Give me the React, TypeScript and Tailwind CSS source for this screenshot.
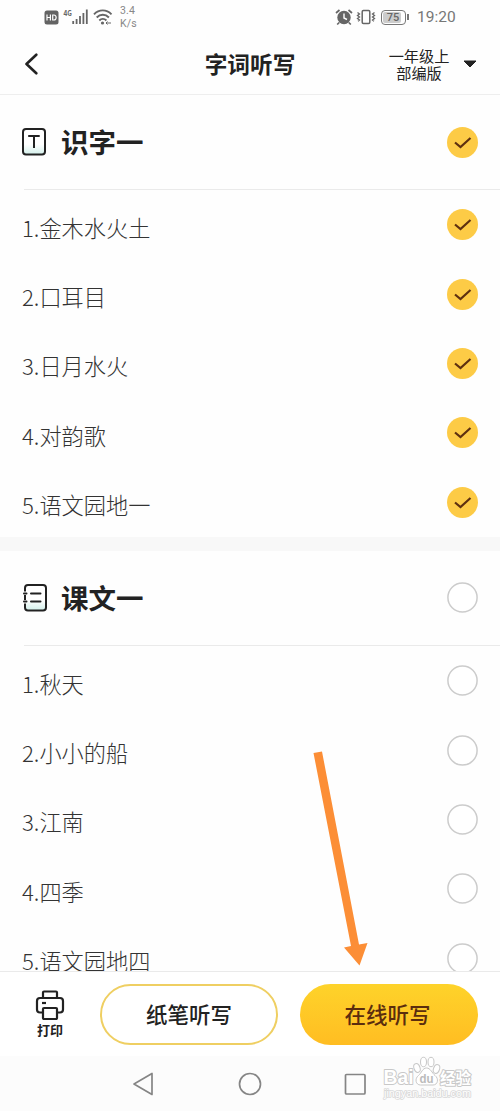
type Section = {
  title: string;
  icon: 'text' | 'book';
  checked: boolean;
  lessons: string[];
};

const sections: Section[] = [
  {
    title: '识字一',
    icon: 'text',
    checked: true,
    lessons: ['1.金木水火土', '2.口耳目', '3.日月水火', '4.对韵歌', '5.语文园地一'],
  },
  {
    title: '课文一',
    icon: 'book',
    checked: false,
    lessons: ['1.秋天', '2.小小的船', '3.江南', '4.四季', '5.语文园地四'],
  },
];

function StatusBar() {
  return (
    <div className="flex h-[34px] shrink-0 items-center justify-between pr-[44px] pl-[44px] text-[#777]">
      <div className="flex items-center">
        <svg width="15" height="15" viewBox="0 0 15 15">
          <rect x="0.5" y="0.5" width="14" height="14" rx="2.5" fill="#636363" />
          <path d="M3 4.5v6M3 7.5h3.4M6.4 4.5v6M8.7 5v5h1.2c3 0 3-5 0-5z" fill="none" stroke="#fff" strokeWidth="1.2" />
        </svg>
        <svg className="ml-[4px]" width="26" height="18" viewBox="0 0 26 18">
          <text x="0.5" y="7.5" fontSize="8" fontWeight="700" fill="#666" textLength="8.5" lengthAdjust="spacingAndGlyphs">4G</text>
          <path d="M10.2 13v3M13.6 11v5M17 8v8M20.4 5v11M23.8 1.500v14.500" stroke="#666" strokeWidth="1.8" />
        </svg>
        <svg className="ml-[4px]" width="20" height="18" viewBox="0 0 20 18" fill="none" stroke="#666" strokeWidth="1.9">
          <path d="M1 6.300c5-5.200 12.500-5.200 17.500 0M3.700 9.500c3.500-3.700 8.700-3.700 12.200 0M6.300 12.500c2.100-2.200 5-2.200 7.100 0" />
          <circle cx="9.500" cy="15" r="1.600" fill="#666" stroke="none" />
          <path d="M13 15h5M14.500 13.500l-1.500 1.500 1.500 1.500" strokeWidth="1" />
        </svg>
        <div className="ml-[7px] font-['Roboto',sans-serif] text-[10.500px] leading-[13px] tracking-[0.2px] text-[#888]">
          <div>3.4</div>
          <div>K/s</div>
        </div>
      </div>
      <div className="flex items-center">
        <svg width="18" height="18" viewBox="0 0 18 18">
          <circle cx="9" cy="9.500" r="6.700" fill="#666" />
          <path d="M1 5l3.500-3M17 5l-3.500-3M4.200 14.500l-2 2M13.800 14.500l2 2" stroke="#666" strokeWidth="1.700" />
          <path d="M9 5.500v4.500l3 1.500" fill="none" stroke="#fff" strokeWidth="1.400" />
        </svg>
        <svg className="ml-[3px]" width="20" height="18" viewBox="0 0 20 18" fill="none" stroke="#666">
          <rect x="6.200" y="2.500" width="7.600" height="13" rx="1.200" strokeWidth="1.500" />
          <path d="M1.500 4.500l2 1.500-2 1.500 2 1.500-2 1.500 2 1.500-1.500 1.200M18.500 4.500l-2 1.500 2 1.500-2 1.500 2 1.500-2 1.500 1.500 1.200" strokeWidth="1.300" />
        </svg>
        <div className="ml-[5px] flex h-[15px] w-[25px] items-center rounded-[4px] border border-[#777] p-px">
          <div className="flex h-full w-[18px] items-center justify-center rounded-[2px] bg-[#ccc] pl-[2px] font-['Roboto',sans-serif] text-[11px] leading-none font-medium text-[#666]">
            75
          </div>
        </div>
        <div className="ml-px h-[6px] w-[2px] bg-[#777]" />
        <span className="ml-[8px] w-[39px] pt-[2px] font-['Roboto','Noto_Sans_CJK_SC',sans-serif] text-[15.500px] leading-none whitespace-nowrap">
          19:20
        </span>
      </div>
    </div>
  );
}

function Header() {
  return (
    <header className="grid h-[61px] shrink-0 grid-cols-[150px_200px_150px] items-center border-b border-[#eee]">
      <svg className="ml-[24px]" width="15" height="22" viewBox="0 0 15 22" fill="none" stroke="#222" strokeWidth="2.600">
        <path d="M12.300 1.700L2.500 11l9.800 9.300" strokeLinecap="round" strokeLinejoin="round" />
      </svg>
      <h1 className="text-center text-[22.700px] leading-none font-bold text-[#222]">字词听写</h1>
      <div className="flex items-center">
        <div className="ml-[38px] w-[62px] text-center text-[15.200px] leading-[17px] whitespace-nowrap text-[#222]">
          一年级上
          <br />
          部编版
        </div>
        <svg className="ml-[13px]" width="14" height="8" viewBox="0 0 14 8">
          <path d="M1 1h12L7 7z" fill="#222" stroke="#222" strokeLinejoin="round" />
        </svg>
      </div>
    </header>
  );
}

function CheckCircle({ checked }: { checked: boolean }) {
  if (!checked) {
    return (
      <svg className="shrink-0" width="31" height="31" viewBox="0 0 31 31">
        <circle cx="15.500" cy="15.500" r="14.600" fill="#fff" stroke="#ccc" strokeWidth="1.500" />
      </svg>
    );
  }
  return (
    <span className="flex h-[31px] w-[31px] shrink-0 items-center justify-center rounded-full bg-[#fdcb46]">
      <svg width="19" height="15" viewBox="0 0 19 15" fill="none" stroke="#5e3010" strokeWidth="2.200">
        <path d="M2 7.500l5.500 4.500L17.500 3" />
      </svg>
    </span>
  );
}

function SectionIcon({ name }: { name: Section['icon'] }) {
  return (
    <svg width="26" height="30" viewBox="0 0 26 30" fill="none" stroke="#222" strokeWidth="2" strokeLinecap="round">
      <defs>
        <linearGradient id={name} x1="0" y1="0" x2="0" y2="1">
          <stop offset="0.600" stopColor="#fff" />
          <stop offset="1" stopColor="#d2efea" />
        </linearGradient>
      </defs>
      {name === 'text' ? (
        <>
          <rect x="2" y="2" width="22" height="25.500" rx="3" fill={`url(#${name})`} />
          <path d="M7.200 9h11.500M13 9v12" strokeLinecap="butt" />
        </>
      ) : (
        <>
          <rect x="4" y="2" width="21" height="25.500" rx="3" fill={`url(#${name})`} />
          <path d="M4 8.500v3.500M4 17v3.500" stroke="#fff" strokeWidth="2.500" strokeLinecap="butt" />
          <path d="M3 10.500h2.500M3 18.500h2.500M4 13v3M10 10.500h9.500M10 18.500h9.500" />
        </>
      )}
    </svg>
  );
}

function LessonSection({ section }: { section: Section }) {
  return (
    <section>
      <div className="flex h-[94px] items-center pr-[22px] pl-[21px]">
        <SectionIcon name={section.icon} />
        <h2 className="ml-[14px] flex-1 text-[27.500px] leading-none font-bold text-[#222]">{section.title}</h2>
        <CheckCircle checked={section.checked} />
      </div>
      <div className="ml-[24px] h-px bg-[#eaeaea]" />
      <ul>
        {section.lessons.map((lesson) => (
          <li key={lesson} className="flex h-[69.400px] items-center justify-between pr-[22px] pl-[22px]">
            <span className="pt-[4px] text-[22.200px] leading-none font-light text-[#333]">{lesson}</span>
            <CheckCircle checked={section.checked} />
          </li>
        ))}
      </ul>
    </section>
  );
}

function ActionBar() {
  return (
    <div className="flex h-[85px] shrink-0 items-center border-t border-[#eaeaea] bg-white">
      <button className="ml-[34px] flex w-[32px] flex-col items-center text-[#222]">
        <svg width="30" height="30" viewBox="0 0 30 30" fill="none" stroke="#222" strokeWidth="2.200" strokeLinejoin="round">
          <path d="M8 8V2.500q0-1 1-1h12q1 0 1 1V8" />
          <path d="M8 22.500H5q-3 0-3-3V11q0-3 3-3h20q3 0 3 3v8.500q0 3-3 3h-3" />
          <rect x="8" y="18" width="14" height="11" rx="1" />
          <path d="M7 13h4" />
        </svg>
        <span className="mt-[3px] mb-[3px] text-[13px] leading-none font-bold whitespace-nowrap">打印</span>
      </button>
      <button className="ml-[34px] h-[61px] w-[178px] rounded-full border-2 border-[#efcf62] bg-white text-[21.500px] leading-none font-medium text-[#222]">
        纸笔听写
      </button>
      <button className="ml-[22px] h-[61px] w-[178px] rounded-full bg-linear-to-b from-[#fed32a] to-[#ffbd22] pr-[3px] text-[21.500px] leading-none font-medium text-[#5b2d0e]">
        在线听写
      </button>
    </div>
  );
}

function Watermark() {
  return (
    <svg
      className="absolute top-[1055px] left-[380px] font-['Liberation_Sans','Noto_Sans_CJK_SC',sans-serif]"
      width="96"
      height="46"
      viewBox="0 0 96 46"
      fill="#fff"
      stroke="#c8c8c8"
      strokeLinejoin="round"
    >
      <g fontWeight="700" strokeWidth="2" paintOrder="stroke">
        <text x="3.500" y="29" fontSize="21" textLength="30" lengthAdjust="spacingAndGlyphs">Bai</text>
        <text x="60" y="28.500" fontSize="15.500" textLength="31" lengthAdjust="spacingAndGlyphs">经验</text>
      </g>
      <g strokeWidth="1">
        <ellipse cx="37" cy="13" rx="3" ry="4.500" transform="rotate(-20 37 13)" />
        <ellipse cx="43.500" cy="7" rx="3" ry="4.700" />
        <ellipse cx="51" cy="7" rx="3" ry="4.700" />
        <ellipse cx="56.500" cy="14" rx="3" ry="4.500" transform="rotate(20 56.500 14)" />
        <path d="M46.500 13c-4 0-5 5-8 7.500-4 3-3 9.500 2 9.500h12.500c5 0 6-6.500 2-9.500-3-2.500-4.500-7.500-8.500-7.500z" />
      </g>
      <text x="39.500" y="27.500" fontSize="12" fontWeight="700" fill="#bbb" stroke="none" textLength="14" lengthAdjust="spacingAndGlyphs">du</text>
      <text x="4" y="42" fontSize="10.500" stroke="#d8d8d8" strokeWidth="1.600" paintOrder="stroke" textLength="87" lengthAdjust="spacingAndGlyphs">
        jingyan.baidu.com
      </text>
    </svg>
  );
}

function SystemNav() {
  return (
    <div className="flex h-[55px] shrink-0 items-center bg-[#fcfcfc]">
      <svg className="ml-[132px]" width="22" height="24" viewBox="0 0 22 24" fill="none" stroke="#858585" strokeWidth="1.700">
        <path d="M20 1.500v21L2 12z" strokeLinejoin="round" />
      </svg>
      <svg className="ml-[84px]" width="24" height="24" viewBox="0 0 24 24" fill="none" stroke="#858585" strokeWidth="1.700">
        <circle cx="12" cy="12" r="10.500" />
      </svg>
      <svg className="ml-[82px]" width="22" height="22" viewBox="0 0 22 22" fill="none" stroke="#858585" strokeWidth="1.700">
        <rect x="1.500" y="1.500" width="19.500" height="19.500" rx="1" />
      </svg>
    </div>
  );
}

export default function App() {
  return (
    <div className="relative flex h-[1111px] w-[500px] flex-col overflow-hidden bg-[#fefefe] font-['Noto_Sans_CJK_SC',sans-serif]">
      <StatusBar />
      <Header />
      <main className="min-h-0 flex-1 overflow-hidden">
        <LessonSection section={sections[0]} />
        <div className="h-[14px] bg-[#f8f8f8]" />
        <LessonSection section={sections[1]} />
      </main>
      <ActionBar />
      <SystemNav />

      {/* Pointer to the online dictation button */}
      <svg className="absolute top-[750px] left-[310px]" width="60" height="218" viewBox="0 0 60 218">
        <path d="M3.500 3L12 1.500 49 194.500 57.500 193 49.500 215.500 34 197.500 41 196z" fill="#fc8e36" />
      </svg>
      <Watermark />
    </div>
  );
}
